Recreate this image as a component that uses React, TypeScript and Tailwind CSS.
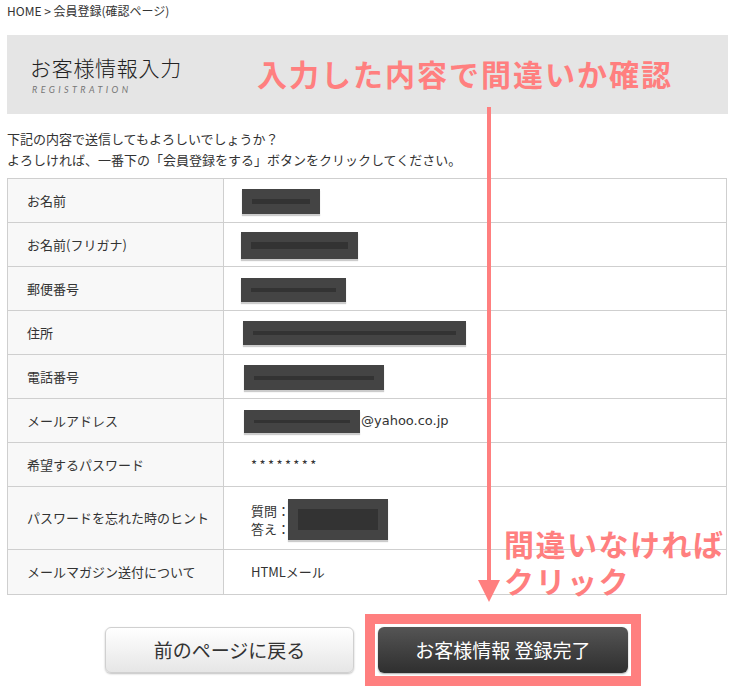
import React from 'react'

const jp = "font-['Hiragino_Kaku_Gothic_ProN','Noto_Sans_CJK_JP',sans-serif]"

interface RedactedProps {
  box: string
  bar: string
}

function Redacted({ box, bar }: RedactedProps) {
  return (
    <div className={`flex items-center px-[10px] bg-[#444] shadow-[0_2px_1px_rgba(0,0,0,0.2)] ${box}`}>
      <div className={`w-full bg-[#333] ${bar}`} />
    </div>
  )
}

interface RowProps {
  label: string
  tall?: boolean
  last?: boolean
  children: React.ReactNode
}

function Row({ label, tall, last, children }: RowProps) {
  return (
    <div className={`flex ${tall ? 'h-[63px]' : 'h-[44px]'} ${last ? '' : 'border-b border-[#cfcfcf]'}`}>
      <div className="w-[216px] shrink-0 flex items-center pl-[19px] bg-[#f8f8f8] border-r border-[#cfcfcf] text-[13px] text-[#333]">
        {label}
      </div>
      <div className="flex-1 flex items-center pl-[17px] text-[13px] text-[#333]">{children}</div>
    </div>
  )
}

export default function App() {
  return (
    <div className={`relative w-[735px] h-[691px] bg-white overflow-hidden ${jp}`}>
      <div className="px-[7px]">
        <div className="pt-[3px] h-[35px] text-[12px] leading-[16px] text-[#333]">HOME &gt; 会員登録(確認ページ)</div>

        <div className="h-[79px] bg-[#e5e5e5] pl-[23px] pt-[19px]">
          <h1 className="text-[21px] leading-[26px] font-light tracking-[0.7px] text-[#222]">お客様情報入力</h1>
          <p className="mt-[5px] pl-[2px] text-[9px] leading-[10px] italic tracking-[3.4px] text-[#777] font-['Lato','Noto_Sans',sans-serif]">
            REGISTRATION
          </p>
        </div>

        <div className="pt-[14px] pb-[8px] text-[13px] leading-[21px] text-[#333]">
          <p>下記の内容で送信してもよろしいでしょうか？</p>
          <p>よろしければ、一番下の「会員登録をする」ボタンをクリックしてください。</p>
        </div>

        <div className="border border-[#cfcfcf] w-[720px]">
          <Row label="お名前">
            <Redacted box="w-[78px] h-[25px] ml-[1px] mt-[2px]" bar="h-[5px]" />
          </Row>
          <Row label="お名前(フリガナ)">
            <Redacted box="w-[117px] h-[27px] mt-[2px]" bar="h-[7px]" />
          </Row>
          <Row label="郵便番号">
            <Redacted box="w-[105px] h-[24px] mt-[2px]" bar="h-[4px]" />
          </Row>
          <Row label="住所">
            <Redacted box="w-[223px] h-[24px] ml-[2px]" bar="h-[4px]" />
          </Row>
          <Row label="電話番号">
            <Redacted box="w-[140px] h-[25px] ml-[3px] mt-[2px]" bar="h-[4px]" />
          </Row>
          <Row label="メールアドレス">
            <Redacted box="w-[116px] h-[23px] ml-[3px] mt-[2px]" bar="h-[3px]" />
            <span className="ml-[1px] font-['DejaVu_Sans',sans-serif] text-[13px]">@yahoo.co.jp</span>
          </Row>
          <Row label="希望するパスワード">
            <span className="ml-[10px] text-[13px] tracking-[2.4px]">********</span>
          </Row>
          <Row label="パスワードを忘れた時のヒント" tall>
            <div className="ml-[10px] flex flex-col leading-[18px] mt-[4px]">
              <span>質問：</span>
              <span>答え：</span>
            </div>
            <Redacted box="w-[100px] h-[41px] -ml-[2px] mt-[2px]" bar="h-[21px]" />
          </Row>
          <Row label="メールマガジン送付について" last>
            <span className="ml-[10px]">HTMLメール</span>
          </Row>
        </div>

        <div className="flex items-center pl-[98px] pt-[19px] gap-[11px]">
          <button className="w-[249px] h-[46px] rounded-[6px] border border-[#d0d0d0] bg-gradient-to-b from-[#ffffff] to-[#e6e6e6] shadow-[0_1px_2px_rgba(0,0,0,0.25)] text-[19px] text-[#333]">
            前のページに戻る
          </button>
          <div className="border-[10px] border-[#ff7f7f] p-[3px] bg-white">
            <button className="w-[250px] h-[46px] rounded-[6px] bg-gradient-to-b from-[#555] to-[#2f2f2f] shadow-[0_1px_2px_rgba(0,0,0,0.35)] text-[19px] text-white">
              お客様情報 登録完了
            </button>
          </div>
        </div>
      </div>

      {/* annotations */}
      <div className="absolute left-[487px] top-[107px] w-[4px] h-[474px] bg-[#ff7f7f]" />
      <div className="absolute left-[478px] top-[580px] w-0 h-0 border-l-[11px] border-r-[11px] border-t-[22px] border-l-transparent border-r-transparent border-t-[#ff7f7f]" />
      <div className="absolute left-[257px] top-[55px] text-[30px] leading-[36px] font-bold tracking-[2px] text-[#ff7f7f]">
        入力した内容で間違いか確認
      </div>
      <div className="absolute left-[504px] top-[525px] text-[30px] leading-[37px] font-bold tracking-[1.5px] text-[#ff7f7f]">
        <p>間違いなければ</p>
        <p>クリック</p>
      </div>
    </div>
  )
}
